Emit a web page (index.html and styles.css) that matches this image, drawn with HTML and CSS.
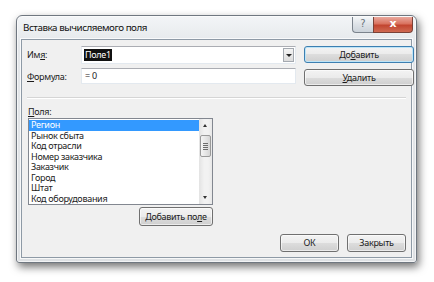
FILE: index.html
```html
<!DOCTYPE HTML>
<html>
<head>
  <meta charset="utf-8">
  <meta name="viewport" content="width=device-width, initial-scale=1">
  <link rel="stylesheet" href="styles.css">
</head>
<body>
  <div class="window">
    <div class="titlebar">
      <span class="title">Вставка вычисляемого поля</span>
      <span class="caption-btn help">?</span>
      <span class="caption-btn close">x</span>
    </div>
    <div class="client">
      <div class="form">
        <label class="lbl">Им<u>я</u>:</label>
        <div class="combo"><span class="sel">Поле1</span><span class="drop"></span></div>
        <button class="btn default">До<u>б</u>авить</button>
        <label class="lbl"><u>Ф</u>ормула:</label>
        <div class="field">= 0</div>
        <button class="btn del"><u>У</u>далить</button>
      </div>
      <div class="sep"></div>
      <div class="fields-lbl"><u>П</u>оля:</div>
      <div class="listbox">
        <ul class="items">
          <li class="active">Регион</li>
          <li>Рынок сбыта</li>
          <li>Код отрасли</li>
          <li>Номер заказчика</li>
          <li>Заказчик</li>
          <li>Город</li>
          <li>Штат</li>
          <li>Код оборудования</li>
        </ul>
        <div class="scrollbar">
          <span class="arrow up"></span>
          <span class="thumb"><i></i><i></i><i></i><i></i></span>
          <span class="track"></span>
          <span class="arrow down"></span>
        </div>
      </div>
      <div class="add-row">
        <button class="btn add-field">Добавить по<u>л</u>е</button>
      </div>
      <div class="footer">
        <button class="btn">ОК</button>
        <button class="btn">Закрыть</button>
      </div>
    </div>
  </div>
</body>
</html>
```

FILE: styles.css
```css
html {font-family: "Noto Sans", "DejaVu Sans", sans-serif;}
body {margin: 0; background: #fff; width: 434px; height: 282px; overflow: hidden;}
u {text-decoration: underline; text-underline-offset: 1px;}

.window {
  box-sizing: border-box;
  width: 401px;
  height: 248px;
  margin: 15px 0 0 16px;
  border: 1px solid #6f7780;
  border-radius: 6px 6px 3px 3px;
  background: linear-gradient(#f3f5f7, #e4e7ea 30px, #dee1e4);
  box-shadow: 2px 4px 9px rgba(0,0,0,.55), 0 0 0 1px rgba(255,255,255,.6) inset;
}

.titlebar {display: flex; height: 23px; padding-left: 6px;}
.title {flex: 1; font-size: 9.8px; letter-spacing: -0.45px; line-height: 24px; color: #111;}
.caption-btn {
  box-sizing: border-box;
  height: 16px;
  margin-top: 1px;
  border: 1px solid #7b838c;
  border-top: none;
  text-align: center;
  font-family: "DejaVu Sans", sans-serif;
  letter-spacing: 0;
  line-height: 14px;
}
.help {
  width: 21px;
  border-radius: 0 0 0 4px;
  border-right: none;
  background: linear-gradient(#f3f5f7, #dde2e7 50%, #ccd3da);
  color: #6a737c;
  font-size: 10px;
}
.close {
  width: 40px;
  margin-right: 3px;
  border-radius: 0 0 4px 0;
  border-color: #7a4238;
  background: linear-gradient(#e9a89d, #d9725f 45%, #c24530 55%, #cf6a52);
  color: #fff;
  font-size: 11px;
  font-weight: bold;
}

.client {
  box-sizing: border-box;
  height: 219px;
  margin: 0 4px;
  padding: 6px 5px 0 5px;
  border: 1px solid #8e9aa6;
  background: #f0f0f0;
  box-shadow: 0 0 0 1px rgba(255,255,255,.75);
  font-size: 9px;
  letter-spacing: -0.3px;
  color: #1b1b1b;
}

.form {
  display: grid;
  grid-template-columns: 46px 215px 110px;
  grid-template-rows: 18px 18px;
  column-gap: 8px;
  row-gap: 4px;
}
.lbl {line-height: 18px;}
.combo {
  box-sizing: border-box;
  display: flex;
  align-items: center;
  border: 1px solid #abadb3;
  border-color: #abadb3 #e3e9ef #e3e9ef #e3e9ef;
  background: #fff;
  padding: 0 1px 0 2px;
}
.sel {background: #111; color: #fff; padding: 0 1px; line-height: 12px; flex: none;}
.combo .sel {margin-right: auto;}
.drop {
  box-sizing: border-box;
  width: 11px;
  height: 14px;
  border: 1px solid #a4a9b0;
  background: linear-gradient(#f4f4f4, #dcdcdc);
  position: relative;
}
.drop:after {
  content: "";
  position: absolute;
  left: 2px; top: 5px;
  border: 3px solid transparent;
  border-top: 3px solid #222;
  border-bottom: none;
}
.field {
  box-sizing: border-box;
  height: 16px;
  border: 1px solid #abadb3;
  border-color: #abadb3 #e3e9ef #e3e9ef #e3e9ef;
  background: #fff;
  padding-left: 3px;
  line-height: 14px;
}

.btn {
  box-sizing: border-box;
  height: 17px;
  padding: 0;
  border: 1px solid #707070;
  border-radius: 3px;
  background: linear-gradient(#f3f3f3, #ebebeb 50%, #dddddd 50%, #cfcfcf);
  font-family: inherit;
  font-size: 9px;
  letter-spacing: -0.3px;
  color: #1b1b1b;
  line-height: 15px;
  box-shadow: 0 0 0 1px rgba(255,255,255,.6) inset;
}
.btn.default {border-color: #3c7fb1; box-shadow: 0 0 0 1px #bde4f7 inset;}
.btn.del {margin-top: 1px;}

.sep {margin-top: 11px; border-top: 1px solid #d5d5d5; border-bottom: 1px solid #fff;}
.fields-lbl {margin-top: 8px; height: 10px; line-height: 10px; padding-left: 1px;}

.listbox {
  box-sizing: border-box;
  display: flex;
  width: 185px;
  height: 87px;
  margin: 1px 0 0 1px;
  border: 1px solid #828790;
  background: #fff;
}
.items {flex: 1; list-style: none; margin: 0; padding: 1px 0 0 0;}
.items li {height: 10.5px; line-height: 10.5px; padding-left: 2px; color: #1b1b1b; white-space: nowrap;}
.items li.active {background: #3399ff; color: #fff;}

.scrollbar {
  width: 13px;
  display: flex;
  flex-direction: column;
  background: linear-gradient(90deg, #e3e3e3, #f2f2f2 40%, #f2f2f2 70%, #e8e8e8);
}
.arrow {height: 15px; position: relative; flex: none;}
.arrow:after {
  content: "";
  position: absolute;
  left: 4px;
  border: 2.5px solid transparent;
}
.arrow.up:after {top: 5px; border-bottom: 3px solid #333; border-top: none;}
.arrow.down:after {top: 7px; border-top: 3px solid #333; border-bottom: none;}
.thumb {
  box-sizing: border-box;
  height: 22px;
  margin: 1px 1px 0;
  border: 1px solid #9a9a9a;
  border-radius: 2px;
  background: linear-gradient(90deg, #f5f5f5, #e6e6e6 50%, #d6d6d6);
  display: flex;
  flex-direction: column;
  justify-content: center;
  align-items: center;
  gap: 1px;
}
.thumb i {display: block; width: 5px; height: 1px; background: #6c6c6c;}
.track {flex: 1;}

.add-row {width: 186px; display: flex; justify-content: flex-end; margin-top: 2px;}
.add-field {width: 74px; height: 19px; line-height: 17px;}

.footer {display: flex; justify-content: flex-end; gap: 8px; margin-top: 8px;}
.footer .btn {width: 59px; height: 18px; line-height: 16px;}
```
